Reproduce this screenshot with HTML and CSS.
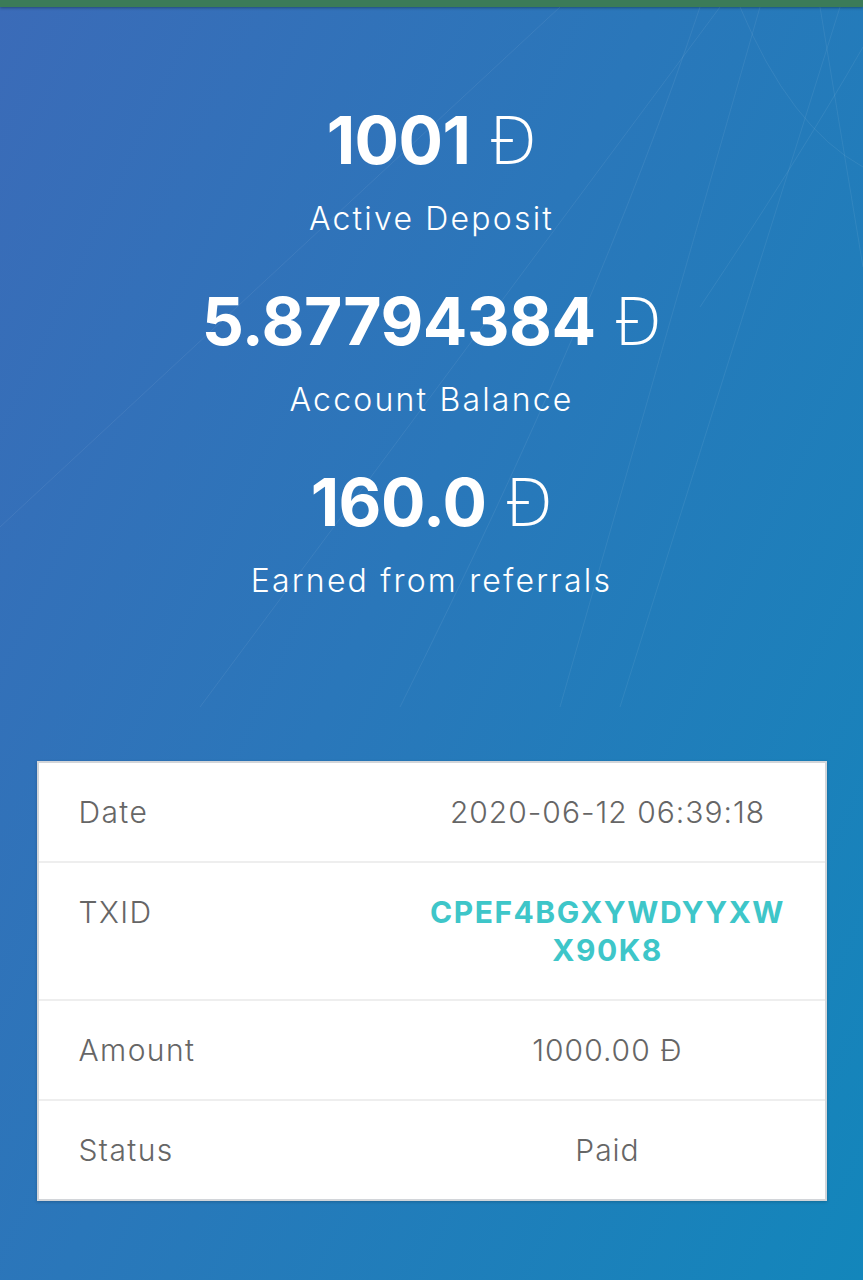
FILE: index.html
```html
<!DOCTYPE html>
<html lang="en">
<head>
  <meta charset="UTF-8">
  <meta name="viewport" content="width=device-width, initial-scale=1.0">
  <title>Deposit</title>
  <link rel="stylesheet" href="styles.css">
</head>
<body>
  <div class="topbar"></div>
  <div class="page">
    <div class="stats">
      <div class="stat">
        <div class="stat-value">1001 <span class="coin">Đ</span></div>
        <div class="stat-label">Active Deposit</div>
      </div>
      <div class="stat">
        <div class="stat-value">5.87794384 <span class="coin">Đ</span></div>
        <div class="stat-label">Account Balance</div>
      </div>
      <div class="stat">
        <div class="stat-value">160.0 <span class="coin">Đ</span></div>
        <div class="stat-label">Earned from referrals</div>
      </div>
    </div>

    <div class="card">
      <div class="row">
        <div class="cell-label">Date</div>
        <div class="cell-value">2020-06-12 06:39:18</div>
      </div>
      <div class="row">
        <div class="cell-label">TXID</div>
        <div class="cell-value txid">CPEF4BGXYWDYYXW X90K8</div>
      </div>
      <div class="row">
        <div class="cell-label">Amount</div>
        <div class="cell-value">1000.00 Đ</div>
      </div>
      <div class="row">
        <div class="cell-label">Status</div>
        <div class="cell-value">Paid</div>
      </div>
    </div>
  </div>
</body>
</html>
```

FILE: styles.css
```css
body {
  margin: 0;
  min-height: 1280px;
  font-family: Inter, "Open Sans", sans-serif;
  color: white;
  background: linear-gradient(115deg, #3b6bb8 0%, #2a77ba 45%, #1386bb 100%);
  overflow: hidden;
}
.topbar {
  height: 7px;
  background: #3b7b58;
  box-shadow: 0 1px 3px rgba(0, 0, 0, 0.35);
}
.page {
  min-height: 1273px;
  background-image: url("data:image/svg+xml;utf8,<svg xmlns='http://www.w3.org/2000/svg' width='863' height='700'><g stroke='white' stroke-opacity='0.07' stroke-width='1' fill='none'><path d='M200 700 L720 0'/><path d='M0 520 L560 0'/><path d='M560 700 L760 0'/><path d='M620 700 L840 0'/><path d='M700 300 Q800 150 863 40'/><path d='M820 0 L863 260'/><path d='M400 700 Q600 300 700 0'/><path d='M740 0 Q790 120 863 160'/></g></svg>");
  background-repeat: no-repeat;
}
.stats {
  padding-top: 91px;
  text-align: center;
}
.stat {
  margin-bottom: 40px;
}
.stat-value {
  font-weight: 700;
  font-size: 66px;
  line-height: 80px;
  letter-spacing: -0.5px;
}
.coin {
  font-family: "Open Sans", sans-serif;
  font-weight: 300;
  letter-spacing: 0;
  margin-left: 4px;
}
.stat-label {
  font-size: 32px;
  font-weight: 300;
  line-height: 40px;
  letter-spacing: 2.2px;
  margin-top: 19px;
}
.card {
  width: 786px;
  margin: 160px auto 0;
  background: white;
  border: 2px solid #d2d5d9;
  box-shadow: 0 1px 3px rgba(0, 0, 0, 0.2);
}
.row {
  display: grid;
  grid-template-columns: 352px 1fr;
  border-bottom: 2px solid #eeeeee;
}
.row:last-child {
  border-bottom: none;
}
.cell-label,
.cell-value {
  padding: 30px 40px;
  font-size: 30px;
  font-weight: 300;
  line-height: 38px;
  letter-spacing: 1.4px;
  color: #666;
}
.cell-value {
  text-align: center;
  letter-spacing: 1px;
}
.txid {
  color: #3ec6c9;
  font-weight: 700;
  letter-spacing: 1.5px;
  padding-left: 20px;
  padding-right: 20px;
}
```
